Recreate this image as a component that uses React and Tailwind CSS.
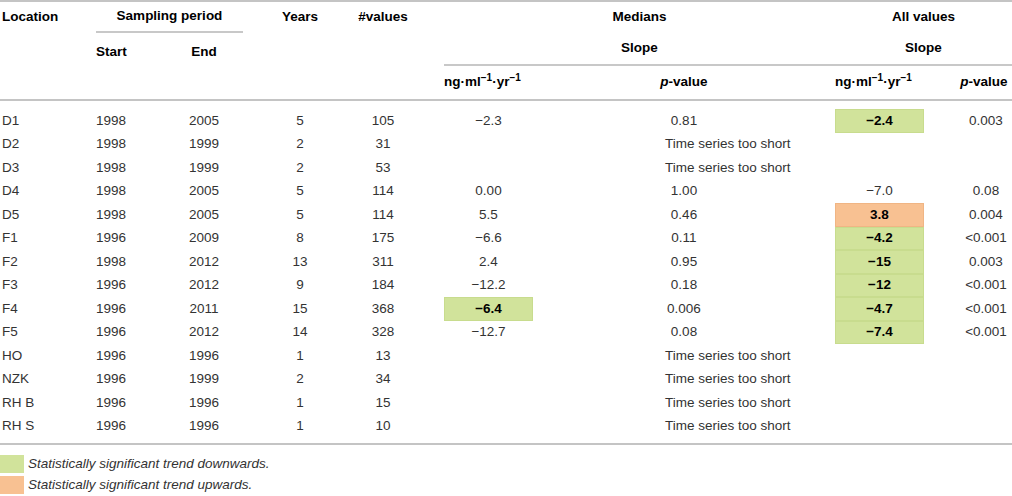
const rows = [
  { loc: 'D1', start: '1998', end: '2005', years: '5', n: '105', mSlope: '−2.3', mP: '0.81', aSlope: '−2.4', aHi: 'down', aP: '0.003' },
  { loc: 'D2', start: '1998', end: '1999', years: '2', n: '31', short: true },
  { loc: 'D3', start: '1998', end: '1999', years: '2', n: '53', short: true },
  { loc: 'D4', start: '1998', end: '2005', years: '5', n: '114', mSlope: '0.00', mP: '1.00', aSlope: '−7.0', aP: '0.08' },
  { loc: 'D5', start: '1998', end: '2005', years: '5', n: '114', mSlope: '5.5', mP: '0.46', aSlope: '3.8', aHi: 'up', aP: '0.004' },
  { loc: 'F1', start: '1996', end: '2009', years: '8', n: '175', mSlope: '−6.6', mP: '0.11', aSlope: '−4.2', aHi: 'down', aP: '<0.001' },
  { loc: 'F2', start: '1998', end: '2012', years: '13', n: '311', mSlope: '2.4', mP: '0.95', aSlope: '−15', aHi: 'down', aP: '0.003' },
  { loc: 'F3', start: '1996', end: '2012', years: '9', n: '184', mSlope: '−12.2', mP: '0.18', aSlope: '−12', aHi: 'down', aP: '<0.001' },
  { loc: 'F4', start: '1996', end: '2011', years: '15', n: '368', mSlope: '−6.4', mHi: 'down', mP: '0.006', aSlope: '−4.7', aHi: 'down', aP: '<0.001' },
  { loc: 'F5', start: '1996', end: '2012', years: '14', n: '328', mSlope: '−12.7', mP: '0.08', aSlope: '−7.4', aHi: 'down', aP: '<0.001' },
  { loc: 'HO', start: '1996', end: '1996', years: '1', n: '13', short: true },
  { loc: 'NZK', start: '1996', end: '1999', years: '2', n: '34', short: true },
  { loc: 'RH B', start: '1996', end: '1996', years: '1', n: '15', short: true },
  { loc: 'RH S', start: '1996', end: '1996', years: '1', n: '10', short: true },
];

const cols = 'grid grid-cols-[96px_69px_78px_114px_52px_35px_89px_264px_38px_89px_88px]';

const Unit = () => (
  <span>
    ng·ml<sup className="text-[10px]">−1</sup>·yr<sup className="text-[10px]">−1</sup>
  </span>
);

const PValue = () => (
  <span>
    <i>p</i>-value
  </span>
);

const SlopeCell = ({ value, hi }) => {
  if (!value) return <div />;
  if (hi) {
    const bg = hi === 'up' ? 'bg-[#f8c192] border-[#f0b584]' : 'bg-[#d1e39b] border-[#c8dc8e]';
    return (
      <div className={`h-full flex items-center justify-center font-bold text-black border ${bg}`}>
        {value}
      </div>
    );
  }
  return <div className="h-full flex items-center justify-center">{value}</div>;
};

export default function App() {
  return (
    <div className="w-[1012px] h-[496px] overflow-hidden bg-white font-['Liberation_Sans',Arial,sans-serif] text-[13.5px] text-[#333]">
      {/* header */}
      <div className="border-t-2 border-[#c4c4c4] font-bold text-black">
        <div className={`${cols} h-[31px] items-center`}>
          <div className="pl-[2px]">Location</div>
          <div className="col-span-2 h-full flex items-center justify-center border-b-2 border-[#c8c8c8]">
            Sampling period
          </div>
          <div className="text-center">Years</div>
          <div className="text-center">#values</div>
          <div />
          <div className="col-span-3 text-center">Medians</div>
          <div className="col-span-2 text-center">All values</div>
        </div>
        <div className={`${cols} h-[33px]`}>
          <div />
          <div className="pt-[9px]">Start</div>
          <div className="pt-[9px] text-center">End</div>
          <div />
          <div />
          <div />
          <div className="col-span-3 flex items-center justify-center border-b-2 border-[#c8c8c8]">Slope</div>
          <div className="col-span-2 flex items-center justify-center border-b-2 border-[#c8c8c8]">Slope</div>
        </div>
        <div className={`${cols} h-[35px] items-center border-b-2 border-[#c4c4c4]`}>
          <div className="col-span-6" />
          <div className="whitespace-nowrap">
            <Unit />
          </div>
          <div className="text-center pl-[38px]">
            <PValue />
          </div>
          <div />
          <div className="whitespace-nowrap">
            <Unit />
          </div>
          <div className="text-center pl-[32px]">
            <PValue />
          </div>
        </div>
      </div>

      {/* body */}
      <div className="pt-[8px] pb-[5px] border-b-2 border-[#c4c4c4]">
        {rows.map((r) => (
          <div key={r.loc} className={`${cols} h-[23.5px] items-center`}>
            <div className="pl-[2px]">{r.loc}</div>
            <div>{r.start}</div>
            <div className="text-center">{r.end}</div>
            <div className="text-center">{r.years}</div>
            <div className="text-center">{r.n}</div>
            <div />
            <SlopeCell value={r.mSlope} hi={r.mHi} />
            {r.short ? (
              <div className="pl-[132px] whitespace-nowrap">Time series too short</div>
            ) : (
              <div className="text-center pl-[38px]">{r.mP}</div>
            )}
            <div />
            <SlopeCell value={r.aSlope} hi={r.aHi} />
            <div className="text-center pl-[36px]">{r.aP}</div>
          </div>
        ))}
      </div>

      {/* legend */}
      <div className="mt-[10px] flex flex-col gap-[3px] italic">
        <div className="flex items-center gap-[4px] h-[18px]">
          <div className="w-[24px] h-[18px] bg-[#d1e39b]" />
          <span>Statistically significant trend downwards.</span>
        </div>
        <div className="flex items-center gap-[4px] h-[18px]">
          <div className="w-[24px] h-[18px] bg-[#f8c192]" />
          <span>Statistically significant trend upwards.</span>
        </div>
      </div>
    </div>
  );
}
